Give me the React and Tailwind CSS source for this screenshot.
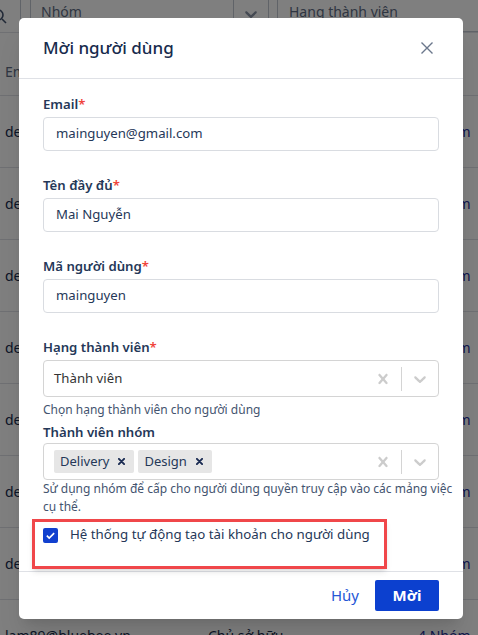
import React from 'react';

const font = { fontFamily: '"Noto Sans", "Liberation Sans", sans-serif' };

const rows = [
  ['demo01@bluebee.vn', '', '2 Nhóm'],
  ['demo02@bluebee.vn', '', '1 Nhóm'],
  ['demo03@bluebee.vn', '', '3 Nhóm'],
  ['demo04@bluebee.vn', '', '2 Nhóm'],
  ['demo05@bluebee.vn', '', '1 Nhóm'],
  ['demo06@bluebee.vn', '', '2 Nhóm'],
  ['demo07@bluebee.vn', '', '3 Nhóm'],
  ['lam89@bluebee.vn', 'Chủ sở hữu', '4 Nhóm'],
];

const Cross = ({ className }) => (
  <svg viewBox="0 0 20 20" className={className} fill="currentColor">
    <path d="M14.348 14.849c-0.469 0.469-1.229 0.469-1.697 0l-2.651-3.030-2.651 3.029c-0.469 0.469-1.229 0.469-1.697 0-0.469-0.469-0.469-1.229 0-1.697l2.758-3.15-2.759-3.152c-0.469-0.469-0.469-1.228 0-1.697s1.228-0.469 1.697 0l2.652 3.031 2.651-3.031c0.469-0.469 1.228-0.469 1.697 0s0.469 1.229 0 1.697l-2.758 3.152 2.758 3.15c0.469 0.469 0.469 1.229 0 1.698z" />
  </svg>
);

const Chevron = ({ className }) => (
  <svg viewBox="0 0 20 20" className={className} fill="currentColor">
    <path d="M4.516 7.548c0.436-0.446 1.043-0.481 1.576 0l3.908 3.747 3.908-3.747c0.533-0.481 1.141-0.446 1.574 0 0.436 0.445 0.408 1.197 0 1.615-0.406 0.418-4.695 4.502-4.695 4.502-0.217 0.223-0.502 0.335-0.787 0.335s-0.57-0.112-0.789-0.335c0 0-4.287-4.084-4.695-4.502s-0.436-1.17 0-1.615z" />
  </svg>
);

const Label = ({ children, required }) => (
  <div className="h-5 text-[13.2px] leading-5 font-semibold text-[#253858]">
    {children}
    {required && <span className="text-[#f0443a]">*</span>}
  </div>
);

const TextField = ({ label, value, className = '' }) => (
  <div className={className}>
    <Label required>{label}</Label>
    <div className="mt-[3px] h-[34px] border border-[#d9dce1] rounded-[4px] px-3 flex items-center text-[13.2px] text-[#253858]">
      {value}
    </div>
  </div>
);

const Indicators = () => (
  <div className="flex items-center self-stretch">
    <div className="px-2 text-[#cccccc]">
      <Cross className="w-5 h-5" />
    </div>
    <div className="w-px h-[24px] bg-[#d4d4d4]" />
    <div className="px-2 text-[#cccccc]">
      <Chevron className="w-5 h-5" />
    </div>
  </div>
);

const Chip = ({ text }) => (
  <div className="h-[23px] bg-[#e6e6e6] rounded-[2px] flex items-center pl-[6px] pr-[9px] text-[13px] text-[#253858]">
    <span>{text}</span>
    <svg viewBox="0 0 8 8" className="w-[7px] h-[7px] ml-[9px] text-[#1a2b52]" stroke="currentColor" strokeWidth="2.2" strokeLinecap="round">
      <path d="M1 1L7 7M7 1L1 7" />
    </svg>
  </div>
);

export default function App() {
  return (
    <div className="relative h-[635px] w-[478px] overflow-hidden bg-white" style={font}>
      {/* page behind the modal */}
      <div className="flex h-[33px] border-b border-[#dfe1e6] text-[14px] leading-4 text-[#5e6c84]">
        <div className="w-[21px] border-r border-[#c1c7d0] flex items-center">
          <svg viewBox="0 0 16 16" className="w-4 h-4 -ml-[9px] text-[#42526e]" fill="none" stroke="currentColor" strokeWidth="1.6">
            <circle cx="7" cy="7" r="5" />
            <path d="M11 11l4 4" />
          </svg>
        </div>
        <div className="ml-[9px] w-[239px] border-x border-b border-[#c1c7d0] rounded-b-[4px] flex items-start pt-[4px]">
          <span className="ml-[10px] flex-1">Nhóm</span>
          <div className="w-px h-[22px] bg-[#c1c7d0] -mt-1" />
          <Chevron className="w-5 h-5 mx-[7px] text-[#8993a4]" />
        </div>
        <div className="ml-[8px] flex-1 border-l border-b border-[#c1c7d0] rounded-bl-[4px] flex items-start pt-[4px]">
          <span className="ml-[11px]">Hạng thành viên</span>
        </div>
      </div>
      <div className="h-[63px] border-b border-[#dfe1e6] flex items-center pt-[14px] pl-[5px] text-[14px] text-[#5e6c84]">
        <span className="w-[14px] overflow-hidden whitespace-nowrap">Email</span>
      </div>
      {rows.map((r, i) => (
        <div key={i} className="h-[72px] border-b border-[#dfe1e6] flex items-center text-[14px] text-[#172b4d]">
          <span className={`pl-[5px] overflow-hidden whitespace-nowrap ${i < 7 ? 'w-[19px] mr-[189px]' : 'w-[208px]'}`}>{r[0]}</span>
          <span className="w-[210px]">{r[1]}</span>
          <span className="text-[#1f2e9a] whitespace-nowrap">{r[2]}</span>
        </div>
      ))}

      {/* overlay + modal */}
      <div className="absolute inset-0 bg-black/50">
        <div className="ml-[19px] mt-[18px] w-[444px] h-[601px] bg-white rounded-[5px] shadow-xl flex flex-col">
          <div className="h-[61px] shrink-0 border-b border-[#dfe1e6] flex items-center justify-between pl-6 pr-[30px]">
            <h3 className="text-[17px] font-medium text-[#172b4d]">Mời người dùng</h3>
            <svg viewBox="0 0 12 12" className="w-3 h-3 text-[#6b778c]" stroke="currentColor" strokeWidth="1.4">
              <path d="M0.5 0.5L11.5 11.5M11.5 0.5L0.5 11.5" />
            </svg>
          </div>

          <div className="relative flex-1 px-6 pt-[15px]">
            <TextField label="Email" value="mainguyen@gmail.com" />
            <TextField label="Tên đầy đủ" value="Mai Nguyễn" className="mt-6" />
            <TextField label="Mã người dùng" value="mainguyen" className="mt-6" />

            <div className="mt-6">
              <Label required>Hạng thành viên</Label>
              <div className="mt-[3px] h-[37px] border border-[#d4d4d4] rounded-[4px] flex items-center">
                <span className="flex-1 pl-[10px] text-[13.2px] text-[#333]">Thành viên</span>
                <Indicators />
              </div>
              <p className="mt-1 text-[12px] leading-[17px] text-[#44546f]">Chọn hạng thành viên cho người dùng</p>
            </div>

            <div className="mt-1">
              <Label>Thành viên nhóm</Label>
              <div className="mt-[1px] h-[37px] border border-[#d4d4d4] rounded-[4px] flex items-center">
                <div className="flex-1 flex gap-1 pl-[10px]">
                  <Chip text="Delivery" />
                  <Chip text="Design" />
                </div>
                <Indicators />
              </div>
              <p className="text-[12px] leading-[18px] text-[#44546f] whitespace-nowrap">
                Sử dụng nhóm để cấp cho người dùng quyền truy cập vào các mảng việc
                <br />
                cụ thể.
              </p>
            </div>

            <label className="mt-[9px] h-5 flex items-center gap-3 text-[13.3px] text-[#253858]">
              <span className="w-[15px] h-[15px] rounded-[2px] bg-[#1140cf] flex items-center justify-center">
                <svg viewBox="0 0 12 12" className="w-[11px] h-[11px]" fill="none" stroke="white" strokeWidth="1.8">
                  <path d="M2 6.2l2.6 2.6L10 3.4" />
                </svg>
              </span>
              Hệ thống tự động tạo tài khoản cho người dùng
            </label>

            <div className="absolute left-[13px] top-[440px] w-[355px] h-[50px] border-[3px] border-[#f0474a] shadow-md" />
          </div>

          <div className="h-[48px] shrink-0 border-t border-[#dfe1e6] flex items-center justify-end pr-6">
            <span className="mr-4 text-[15px] text-[#2557d6]">Hủy</span>
            <button className="w-16 h-[31px] bg-[#0c40cf] rounded-[2px] text-white text-[15px] font-bold">
              Mời
            </button>
          </div>
        </div>
      </div>
    </div>
  );
}
